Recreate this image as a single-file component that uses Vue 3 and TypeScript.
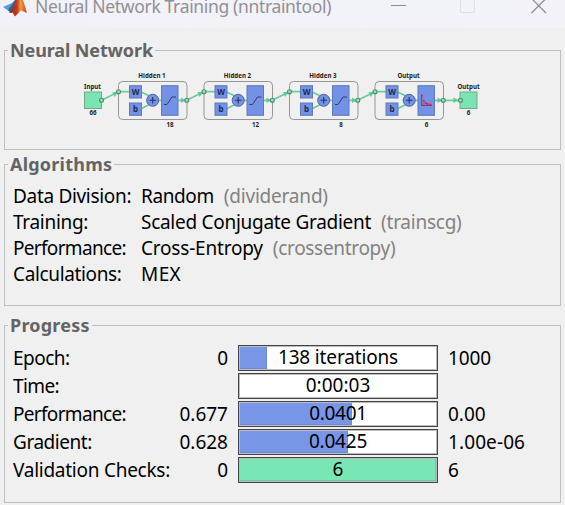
<script setup lang="ts">
interface Layer { name: string; x: number; size: string; kind: 'sigmoid' | 'softmax' }
interface Algorithm { label: string; value: string; fn?: string; ls: string; vs: string; fs?: string }
interface Progress { label: string; ls: string; start: string; text: string; ts: string; end: string; es: string; fill: number; done?: boolean }

const layers: Layer[] = [
  { name: 'Hidden 1', x: 118.5, size: '18', kind: 'sigmoid' },
  { name: 'Hidden 2', x: 204, size: '12', kind: 'sigmoid' },
  { name: 'Hidden 3', x: 289.5, size: '8', kind: 'sigmoid' },
  { name: 'Output', x: 375, size: '6', kind: 'softmax' },
]

const algorithms: Algorithm[] = [
  { label: 'Data Division:', ls: '-.32px', value: 'Random', vs: '-.4px', fn: '(dividerand)', fs: '-.2px' },
  { label: 'Training:', ls: '-.3px', value: 'Scaled Conjugate Gradient', vs: '-.28px', fn: '(trainscg)', fs: '-.25px' },
  { label: 'Performance:', ls: '-.68px', value: 'Cross-Entropy', vs: '-.2px', fn: '(crossentropy)', fs: '-.32px' },
  { label: 'Calculations:', ls: '-.36px', value: 'MEX', vs: '.4px' },
]

const progress: Progress[] = [
  { label: 'Epoch:', ls: '-.5px', start: '0', text: '138 iterations', ts: '-.15px', end: '1000', es: '-.1px', fill: 27 },
  { label: 'Time:', ls: '-.6px', start: '', text: '0:00:03', ts: '0', end: '', es: '0', fill: 0 },
  { label: 'Performance:', ls: '-.68px', start: '0.677', text: '0.0401', ts: '-.3px', end: '0.00', es: '0', fill: 112 },
  { label: 'Gradient:', ls: '-.45px', start: '0.628', text: '0.0425', ts: '-.2px', end: '1.00e-06', es: '.1px', fill: 108 },
  { label: 'Validation Checks:', ls: '-.26px', start: '0', text: '6', ts: '0', end: '6', es: '0', fill: 196, done: true },
]
</script>

<template>
  <div class="window">
    <header class="titlebar">
      <svg class="logo" width="26" height="18" viewBox="0 0 26 18">
        <defs>
          <linearGradient id="flame" x1="0" x2="1">
            <stop offset="0" stop-color="#7c2a25" />
            <stop offset=".45" stop-color="#c83b20" />
            <stop offset=".65" stop-color="#f49a3e" />
            <stop offset="1" stop-color="#b94424" />
          </linearGradient>
        </defs>
        <path d="M0 7 L9 3 L15 -3 L13 8 L7 12 Z" fill="#4f9ed8" />
        <path d="M5 10 L10 3 L15 -4 L14 9 L8 13 Z" fill="#3a5f8c" />
        <path d="M6 13 L10 8 L15 -7 L18.500 -5 L24 13 L18 10.500 L12 16.500 L9.500 12.500 Z" fill="url(#flame)" />
      </svg>
      <span class="title">Neural Network Training (nntraintool)</span>
      <svg class="controls" width="160" height="18" viewBox="0 0 160 18">
        <path d="M1 5.5H16" stroke="#8c8a90" />
        <rect x="70.5" y="-2" width="14" height="14.500" rx="1.500" fill="none" stroke="#dedfe5" />
        <path d="M141.500 -1.500L156 13M156 -1.500L141.500 13" stroke="#8c8a90" stroke-width="1.200" />
      </svg>
    </header>

    <section class="panel network">
      <h2>Neural Network</h2>
      <svg class="diagram" width="400" height="66" viewBox="80 70 400 66">
        <g class="caption">
          <text x="92.500" y="89">Input</text>
          <text x="93" y="115">66</text>
          <text x="468.500" y="89">Output</text>
          <text x="468.500" y="115">6</text>
        </g>
        <rect x="84.500" y="92" width="17" height="16.500" fill="#7ae5b3" stroke="#72a98d" />
        <rect x="460" y="92" width="17" height="16.500" fill="#7ae5b3" stroke="#72a98d" />
        <g v-for="(layer, i) in layers" :key="layer.name" :transform="`translate(${layer.x} 0)`">
          <rect x="0" y="81.500" width="68.500" height="38" rx="4" fill="none" stroke="#959595" />
          <path class="wire" d="M0 91.700H12M22 91.700L31 96M22 109L31 104.500M38 100.300H44M59 100.300H68" />
          <path d="M62.500 97.500L67 100.300L62.500 103.100Z" fill="#60c898" />
          <g fill="#7492e5" stroke="#6079b8">
            <rect x="11" y="85.700" width="12" height="12.300" />
            <rect x="11" y="103" width="12" height="12.300" />
            <circle cx="34.200" cy="100.300" r="6" stroke="#4b629b" />
            <rect x="43" y="85.700" width="16.500" height="29.600" />
          </g>
          <path d="M31 100.300H37.500M34.200 97V103.600" stroke="#263558" stroke-width="1.100" />
          <path v-if="layer.kind === 'sigmoid'" d="M45.500 104.500H48.500L53.500 97H57.500" fill="none" stroke="#303f69" />
          <g v-else>
            <path d="M46.500 95V105.500H57" fill="none" stroke="#463c78" stroke-width=".8" />
            <path d="M46.800 95V105M49 101V105M51.500 103V105" stroke="#d62950" stroke-width=".8" />
            <circle v-for="p in [[46.800, 95.500], [48.800, 100.800], [50.800, 103], [53, 104], [55.500, 104.500]]" :key="p[0]" :cx="p[0]" :cy="p[1]" r=".9" fill="#f01030" />
          </g>
          <g class="caption">
            <text class="mark" x="17" y="94.800">W</text>
            <text class="mark" x="17" y="112.200">b</text>
            <text x="33.500" y="78.300">{{ layer.name }}</text>
            <text x="51.500" y="127.300">{{ layer.size }}</text>
          </g>
          <path v-if="i < 3" class="wire" d="M68 100.300L85.500 91.700" />
          <path v-if="i < 3" d="M79 92L84.500 92.200L81.200 97Z" fill="#60c898" />
        </g>
        <path class="wire" d="M101.500 100.300L118.500 91.700M443.500 100.300H460" />
        <path d="M112.500 92L118 92.200L114.500 97ZM453.500 97.500L458.500 100.300L453.500 103.100Z" fill="#60c898" />
        <g fill="#8fe3ba" stroke="#4b8d6d" stroke-width="1.100">
          <template v-for="layer in layers" :key="layer.x">
            <circle :cx="layer.x" cy="91.700" r="2" />
            <circle :cx="layer.x + 68.300" cy="100.300" r="2" />
          </template>
          <circle cx="101.500" cy="100.300" r="2" />
          <circle cx="460.500" cy="100.300" r="2" />
        </g>
      </svg>
    </section>

    <section class="panel algorithms">
      <h2>Algorithms</h2>
      <div v-for="a in algorithms" :key="a.label" class="algorithm">
        <span class="label" :style="{ letterSpacing: a.ls }">{{ a.label }}</span>
        <span class="value" :style="{ letterSpacing: a.vs }">{{ a.value }}</span>
        <span v-if="a.fn" class="fn" :style="{ letterSpacing: a.fs }">{{ a.fn }}</span>
      </div>
    </section>

    <section class="panel progress">
      <h2>Progress</h2>
      <div v-for="p in progress" :key="p.label" class="row">
        <span class="label" :style="{ letterSpacing: p.ls }">{{ p.label }}</span>
        <span class="start">{{ p.start }}</span>
        <div class="bar">
          <i :class="{ done: p.done }" :style="{ width: p.fill + 'px' }"></i>
          <b :style="{ letterSpacing: p.ts }">{{ p.text }}</b>
        </div>
        <span class="end" :style="{ letterSpacing: p.es }">{{ p.end }}</span>
      </div>
    </section>
  </div>
</template>

<style>
body { margin: 0; background: #f0f0f0; overflow: hidden; }
</style>

<style scoped>
.window { box-sizing: border-box; width: 565px; height: 505px; overflow: hidden; background: #f0f0f0; color: #000; font: 19px/26px "Noto Sans", "Open Sans", sans-serif; }
.titlebar { display: flex; align-items: flex-start; height: 28px; margin-bottom: 22px; background: linear-gradient(90deg, #f3f1f8, #f1f3f9 65%, #f3f2f9); color: #929094; }
.logo { flex: none; margin-left: 3px; }
.title { flex: none; width: 361px; box-sizing: border-box; padding-left: 6px; margin-top: -7px; font-size: 17.5px; letter-spacing: -.34px; white-space: nowrap; }
.controls { flex: none; margin-left: 0; }
.panel { box-sizing: border-box; width: 557px; margin-left: 4px; border: 1px solid #bfbfbf; }
.network { height: 100px; margin-bottom: 14px; }
.algorithms { height: 142px; margin-bottom: 19px; }
.progress { height: 178px; }
h2 { width: max-content; height: 26px; margin: -14px 0 0 3px; padding: 0 2px; background: #f0f0f0; color: #646464; font: bold 18px/26px "Noto Sans", sans-serif; letter-spacing: .22px; white-space: nowrap; }
.network h2 { letter-spacing: -.12px; }
.diagram { display: block; margin: 7px 0 0 75px; }
.caption { font: bold 6.2px "Noto Sans", sans-serif; text-anchor: middle; fill: #1c1c1c; stroke: none; }
.caption .mark { font-size: 8px; fill: #1c2a4c; }
.wire { fill: none; stroke: #6dcb9f; stroke-width: 1.700; }
.algorithms h2 { margin-bottom: 6px; }
.algorithm { display: flex; height: 26px; padding-left: 8px; white-space: nowrap; }
.algorithm .label { width: 128px; flex: none; }
.fn { margin-left: 10px; color: #828282; }
.progress h2 { margin-bottom: 7px; }
.row { display: grid; grid-template-columns: 165px 50px 200px auto; height: 28px; padding-left: 8px; white-space: nowrap; }
.row .start { text-align: right; }
.bar { display: grid; box-sizing: border-box; width: 200px; height: 26px; margin-left: 10px; border: 1px solid #454347; background: #fff; box-shadow: inset 0 0 0 1px #bdbdbd; padding: 1px; }
.bar i { grid-area: 1 / 1; height: 22px; background: #7896e7; box-shadow: inset -1px -1px #7089d3; }
.bar .done { background: #79e7b5; box-shadow: inset -1px -1px #6bcaa0; }
.bar b { grid-area: 1 / 1; align-self: start; text-align: center; font-weight: 400; line-height: 20px; color: #000; }
.end { margin-left: 20px; }
</style>
